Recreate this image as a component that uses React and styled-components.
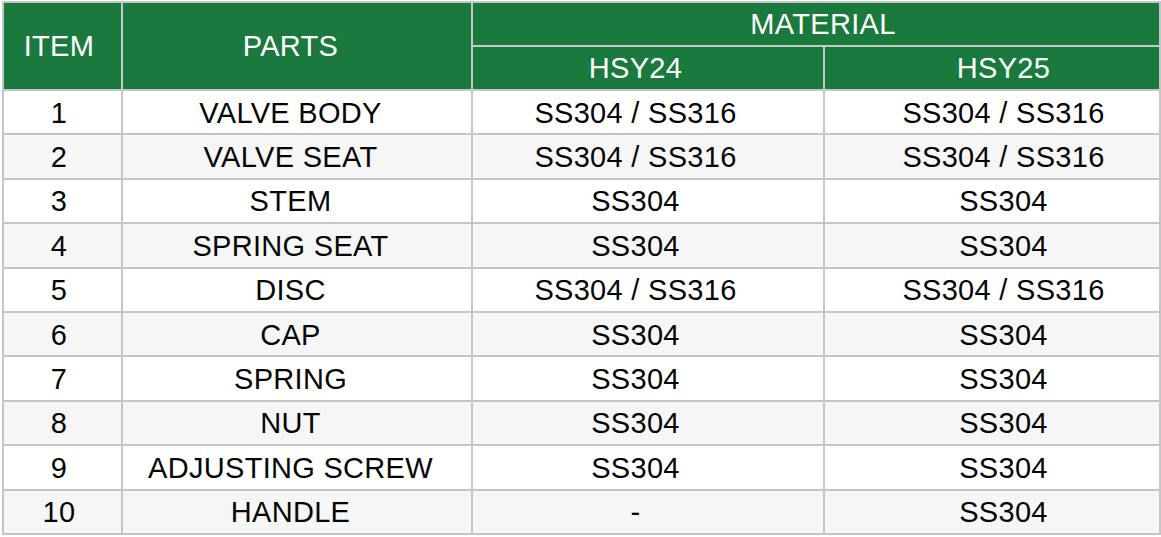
import React from 'react'
import styled, { createGlobalStyle } from 'styled-components'

const GlobalStyle = createGlobalStyle`
  html, body {
    margin: 0;
    padding: 0;
    background: #ffffff;
  }
`

const Wrapper = styled.div`
  padding: 1px 0 0 2px;
  width: 1161px;
  height: 537px;
  box-sizing: border-box;
  background: #ffffff;
`

const Table = styled.table`
  width: 1157px;
  border-collapse: collapse;
  table-layout: fixed;
  font-family: 'Liberation Sans', Arial, sans-serif;
  font-size: 29px;
  letter-spacing: 0.3px;
  color: #050505;
`

// text in the source sits a little off the column centre
const shift = ({ $shift = 0 }) =>
  $shift > 0
    ? `padding-left: ${$shift * 2}px; padding-right: 0;`
    : `padding-right: ${-$shift * 2}px; padding-left: 0;`

const HeadCell = styled.th`
  background: #1a7a3e;
  color: #ffffff;
  font-weight: 400;
  text-align: center;
  border: 2px solid #c6c6c6;
  height: ${({ $h }) => $h}px;
  line-height: 1;
  padding-top: 0;
  padding-bottom: 0;
  ${shift}
`

const Row = styled.tr`
  height: 44.4px;
  background: ${({ $alt }) => ($alt ? '#f6f6f6' : '#ffffff')};
`

const Cell = styled.td`
  border: 2px solid #c6c6c6;
  text-align: center;
  line-height: 1;
  padding-top: 2px;
  padding-bottom: 0;
  ${shift}
`

const shifts = [-3.5, -6.5, -12.5, 11.5]

const rows = [
  ['1', 'VALVE BODY', 'SS304 / SS316', 'SS304 / SS316'],
  ['2', 'VALVE SEAT', 'SS304 / SS316', 'SS304 / SS316'],
  ['3', 'STEM', 'SS304', 'SS304'],
  ['4', 'SPRING SEAT', 'SS304', 'SS304'],
  ['5', 'DISC', 'SS304 / SS316', 'SS304 / SS316'],
  ['6', 'CAP', 'SS304', 'SS304'],
  ['7', 'SPRING', 'SS304', 'SS304'],
  ['8', 'NUT', 'SS304', 'SS304'],
  ['9', 'ADJUSTING SCREW', 'SS304', 'SS304'],
  ['10', 'HANDLE', '-', 'SS304'],
]

const App = () => (
  <Wrapper>
    <GlobalStyle />
    <Table>
      <colgroup>
        <col style={{ width: 119 }} />
        <col style={{ width: 350 }} />
        <col style={{ width: 352 }} />
        <col style={{ width: 336 }} />
      </colgroup>
      <thead>
        <tr>
          <HeadCell rowSpan={2} $shift={shifts[0]}>{'ITEM'}</HeadCell>
          <HeadCell rowSpan={2} $shift={shifts[1]}>{'PARTS'}</HeadCell>
          <HeadCell colSpan={2} $h={42} $shift={7}>{'MATERIAL'}</HeadCell>
        </tr>
        <tr>
          <HeadCell $h={42} $shift={shifts[2]}>{'HSY24'}</HeadCell>
          <HeadCell $h={42} $shift={shifts[3]}>{'HSY25'}</HeadCell>
        </tr>
      </thead>
      <tbody>
        {rows.map((r, i) => (
          <Row key={r[0]} $alt={i % 2 === 1}>
            {r.map((c, j) => (
              <Cell key={j} $shift={shifts[j]}>{c}</Cell>
            ))}
          </Row>
        ))}
      </tbody>
    </Table>
  </Wrapper>
)

export default App
